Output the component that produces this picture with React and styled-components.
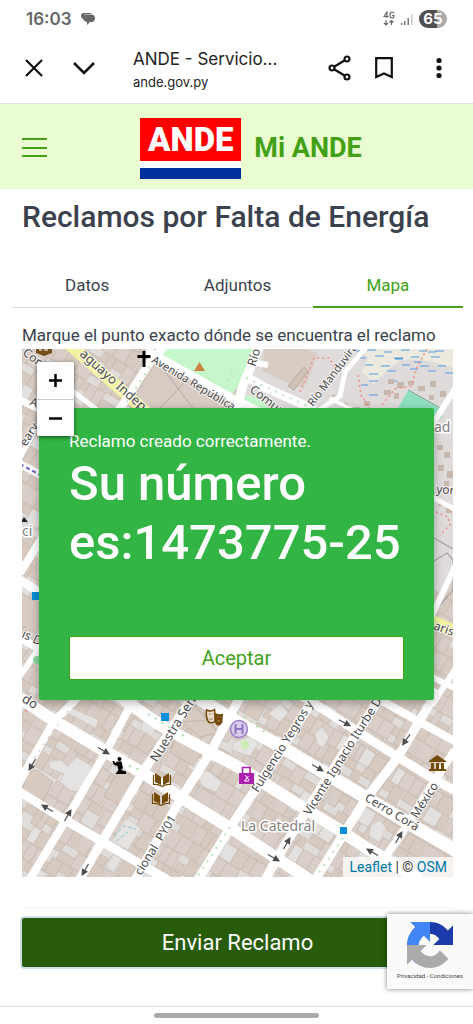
import { useState } from 'react';
import styled, { createGlobalStyle } from 'styled-components';

const GlobalStyle = createGlobalStyle`
* {
  box-sizing: border-box;
}
body {
  margin: 0;
  background: #ffffff;
  color: #3b424d;
  font-family: Roboto, 'Liberation Sans', sans-serif;
}
button {
  font-family: inherit;
  padding: 0;
  border: none;
  cursor: pointer;
}
`

const AppBody = styled.div`
position: relative;
display: flex;
flex-direction: column;
min-height: 100vh;
`

const StatusBar = styled.div`
display: flex;
align-items: center;
justify-content: space-between;
height: 38px;
padding: 0 26px;
color: #666666;
font-family: Inter, sans-serif;
`

const StatusGroup = styled.div`
display: flex;
align-items: center;
gap: ${props => props.$gap}px;
`

const Clock = styled.span`
font-size: 17px;
font-weight: 600;
`

const Battery = styled.span`
width: 28px;
height: 18px;
border-radius: 9px;
background: linear-gradient(90deg, #505050 65%, #aaaaaa 65%);
color: #ffffff;
font-size: 15px;
font-weight: 700;
line-height: 18px;
text-align: center;
`

const BrowserBar = styled.div`
display: flex;
align-items: flex-start;
height: 66px;
padding: 8px 1px 0 22px;
border-bottom: 1px solid #dbe3e3;
`

const IconButton = styled.button`
display: flex;
align-items: center;
justify-content: center;
width: ${props => props.$width || 44}px;
height: 44px;
background: transparent;
color: #111111;
`

const PageInfo = styled.div`
flex: 1;
min-width: 0;
padding-left: 11px;
color: #222222;
font-family: Inter, sans-serif;
`

const PageTitle = styled.div`
font-size: 17px;
line-height: 26px;
white-space: nowrap;
`

const PageUrl = styled.div`
font-size: 13px;
line-height: 20px;
`

const Header = styled.header`
position: relative;
display: flex;
align-items: center;
justify-content: center;
height: 85px;
padding-left: 29px;
background: #e9fdd0;
`

const MenuButton = styled.button`
position: absolute;
left: 22px;
top: 30px;
width: 25px;
height: 28px;
background: transparent;
color: #43a017;
`

const Brand = styled.a`
display: flex;
align-items: center;
gap: 13px;
padding-top: 3px;
color: #43a017;
font-size: 27px;
font-weight: 700;
text-decoration: none;
`

const Logo = styled.span`
width: 101px;
border-bottom: 11px solid #00309c;
background: #ffffff;
padding-bottom: 7px;
`

const LogoName = styled.span`
display: block;
height: 43px;
background: #fe0000;
color: #ffffff;
font-size: 33px;
font-weight: 900;
line-height: 43px;
text-align: center;
`

const Main = styled.main`
flex: 1;
display: flex;
flex-direction: column;
padding: 0 20px 0 22px;
`

const Title = styled.h1`
margin: 10px 0 0;
font-size: 30px;
font-weight: 500;
line-height: 36px;
`

const Tabs = styled.div`
display: flex;
height: 45px;
margin: 28px -10px 15px;
`

const Tab = styled.button`
flex: 1;
background: transparent;
border-bottom: ${props => props.$active ? '2px solid #43a017' : '1px solid #dcdcdc'};
color: ${props => props.$active ? '#43a017' : '#3b424d'};
font-size: 17px;
`

const Hint = styled.p`
margin: 0 0 2px;
font-size: 17px;
line-height: 24px;
white-space: nowrap;
`

const MapBox = styled.section`
position: relative;
flex: 1;
min-height: 480px;
overflow: hidden;
`

const MapSvg = styled.svg`
position: absolute;
width: 100%;
height: 100%;
font-family: 'Noto Sans', sans-serif;
`

const ZoomControl = styled.div`
position: absolute;
z-index: 2;
top: 13px;
left: 15px;
width: 37px;
border-radius: 2px;
background: #ffffff;
box-shadow: 0 1px 4px rgba(0, 0, 0, 0.6);
`

const ZoomButton = styled.button`
display: flex;
align-items: center;
justify-content: center;
width: 100%;
height: 37px;
background: transparent;

& + & {
  border-top: 1px solid #cccccc;
}
`

const Dialog = styled.div`
position: absolute;
top: 59px;
left: 17px;
right: 19px;
padding: 20px 30px;
border-radius: 2px;
background: #32b544;
box-shadow: 0 3px 10px rgba(0, 0, 0, 0.3);
color: #ffffff;
`

const DialogText = styled.p`
margin: 0;
font-size: 17px;
line-height: 26px;
`

const DialogTitle = styled.h2`
margin: 0 0 64px;
font-size: 49px;
font-weight: 500;
line-height: 59px;
`

const TicketNumber = styled.span`
display: block;
white-space: nowrap;
`

const AcceptButton = styled.button`
width: 100%;
height: 44px;
border: 1px solid #43a017;
border-radius: 2px;
background: #ffffff;
color: #43a017;
font-size: 20px;
`

const Attribution = styled.div`
position: absolute;
right: 0;
bottom: 0;
padding: 0 6px;
background: rgba(255, 255, 255, 0.75);
color: #333333;
font-size: 14px;
line-height: 20px;

a {
  color: #0078a8;
  text-decoration: none;
}
`

const Actions = styled.div`
margin-top: 30px;
padding: 10px 0 39px;
border-top: 1px solid #f5f5f5;
`

const SendButton = styled.button`
width: 100%;
height: 49px;
border-radius: 2px;
background: #285c0b;
box-shadow: 0 0 0 2px #cfdfe8;
color: #ffffff;
font-size: 22px;
`

const Captcha = styled.aside`
position: absolute;
right: 0;
bottom: 35px;
display: flex;
flex-direction: column;
align-items: center;
gap: 2px;
width: 86px;
height: 75px;
padding-top: 8px;
background: #fafafa;
box-shadow: 0 0 5px rgba(0, 0, 0, 0.5);
color: #444444;
font-size: 6px;
line-height: 12px;
`

const HomeArea = styled.footer`
display: flex;
justify-content: center;
height: 18px;
padding-top: 6px;
border-top: 1px solid #dcdcdc;
`

const HomeHandle = styled.div`
width: 35%;
height: 5px;
border-radius: 3px;
background: #aaaaaa;
`

const roads = [
  // north-west to south-east
  ['M20 698L53 720L108 753L143 773L183 799L240 834L310 880', 12],
  ['M100 682L133 706L163 727L210 752L240 768L302 807L338 829L368 849L420 880', 12],
  ['M190 693L235 721L278 745L328 775L365 797L415 827L458 852', 13],
  ['M295 692L312 702L352 728L398 757L435 780L458 792', 9],
  ['M370 694L418 721L458 743', 8],
  ['M20 792L60 817L103 842L150 870L168 880', 9],
  ['M20 464L45 477', 8],
  ['M20 580L45 596', 9],
  ['M20 638L45 652', 8],
  ['M430 496L458 511', 5],
  ['M430 676L458 690', 6],
  // south-west to north-east
  ['M78 697L53 723L30 763L18 785', 8],
  ['M137 693L103 757L70 813L28 882', 8],
  ['M195 693L143 772L103 840L78 882', 9],
  ['M240 697L210 753L180 800L153 848L135 880', 9],
  ['M317 693L278 755L255 790L230 828L198 880', 9],
  ['M385 690L328 777L305 813L285 845L265 880', 9],
  ['M438 690L398 757L365 800L343 835L315 880', 9],
  ['M455 750L435 780L402 833L380 865', 8],
  ['M20 573L45 533', 8],
  ['M20 676L45 640', 6],
  ['M20 458L38 425', 5],
  ['M430 620L458 560', 6],
  ['M432 705L458 665', 6],
  ['M432 425L458 384', 6],
  // north of the dialog
  ['M20 400L45 412', 7],
  ['M166 345L150 362L118 412', 8],
  ['M66 386L100 412', 5],
  ['M146 350L230 397L260 412', 8],
  ['M260 345L243 385L236 412', 9],
  ['M243 375L264 387L315 410', 9],
  ['M252 362L268 365', 6],
  ['M368 345L345 372L340 396L316 412', 5],
  ['M330 398L352 410', 4],
]

const arrows = [
  [104, 751, 30], [32, 765, 120], [47, 808, 210], [68, 815, -60], [85, 870, 120],
  [345, 723, 28], [318, 768, 30], [406, 740, 125], [287, 843, -60],
  [274, 858, 30], [372, 852, 210], [399, 837, -60],
]

const labels = [
  ['aguayo Indepen', 79, 355, 42, 13],
  ['Avenida República', 151, 362, 31, 11],
  ['Con', 22, 354, 38, 12],
  ['Río', 255, 367, -72, 12],
  ['Comun', 249, 391, 38, 12],
  ['Río Manduvirá', 313, 407, -53, 11],
  ['A', 29, 405, 20, 12],
  ['eary', 26, 447, -58, 12],
  ['is D', 21, 637, 25, 12],
  ['do', 21, 701, 32, 13],
  ['yor', 436, 493, 5, 12],
  ['aris', 433, 629, 20, 12],
  ['Nuestra Señora', 157, 763, -58, 13],
  ['Fulgencio Yegros y F', 258, 793, -58, 12],
  ['Vicente Ignacio Iturbe Dom', 310, 816, -58, 12],
  ['Cerro Corá', 364, 800, 31, 12],
  ['México', 417, 819, -57, 12],
  ['PY01', 162, 842, -58, 12],
  ['cional', 141, 876, -58, 12],
]

// Plots are laid out on a grid that is turned with the streets
function makePlots() {
  const plots = []
  let seed = 17
  const rand = () => {
    seed = (seed * 16807) % 2147483647
    return seed / 2147483647
  }
  for (let y = -280; y < 340; y += 17) {
    let x = -340
    while (x < 340) {
      const w = 6 + Math.round(rand() * 10)
      const kind = rand()
      const h = kind > 0.7 ? 9 : 16
      plots.push({ x, y: y + (kind > 0.85 ? 7 : 0), w, h, fill: kind < 0.08 ? '#e3e1df' : kind < 0.5 ? '#d9cfc8' : '#d6cac1' })
      x += w + (rand() > 0.85 ? 2 : 0)
    }
  }
  return plots
}

const plots = makePlots()

function CityMap() {
  return (
    <MapSvg viewBox="22 349 431 528" preserveAspectRatio="xMidYMid slice" aria-label="Mapa">
      <rect x="0" y="300" width="500" height="620" fill="#dfdcda" />
      <g transform="translate(237 640) rotate(31)" stroke="#c6b8ad" strokeWidth="0.7">
        {plots.map((p, i) => <rect key={i} x={p.x} y={p.y} width={p.w} height={p.h} fill={p.fill} />)}
      </g>
      {/* larger buildings */}
      <g fill="#d6cac1" stroke="#c3b3a7" strokeWidth="0.8">
        <path d="M28 772L37 770L53 782L43 801L22 790Z" />
        <path d="M119 769L139 781L123 807L104 796Z" />
        <path d="M178 734L204 749L193 766L170 752Z" />
        <path d="M181 722L192 703L218 733L200 737Z" />
        <path d="M20 592L38 603L38 634L20 625Z" />
      </g>
      <path d="M181 722L210 720M192 703L210 720L218 733" fill="none" stroke="#c3b3a7" strokeWidth="0.8" />
      <g fill="#e5e3e2" stroke="#cfc5be" strokeWidth="0.6">
        <path d="M49 762L60 760L68 766L76 757L92 766L82 793L70 790L60 782L64 774L50 768Z" />
        <path d="M126 818L141 828L128 850L112 841Z" />
        <path d="M69 707L98 720L96 728L68 713Z" />
        <path d="M134 713L141 709L147 717L158 724L152 736L140 729L143 722Z" />
        <path d="M197 775L208 771L222 782L216 792L202 786Z" />
        <path d="M371 825L380 820L386 828L379 842L369 836Z" />
        <path d="M315 734L322 727L329 737L323 748L317 744Z" />
        <path d="M280 703L288 713L280 722L269 714Z" />
        <path d="M234 742L252 736L258 744L250 756L232 750Z" />
      </g>
      <path d="M240 742L247 740L250 746L243 751Z" fill="#cdebb4" />
      <path d="M114 836L124 826L136 829M116 841L128 832" fill="none" stroke="#8ac5cf" strokeDasharray="4 2" />
      {/* northern edge */}
      <path d="M236 345H458V580L430 590V412H236Z" fill="#dedbda" />
      <path d="M146 376L168 350L236 408H130Z" fill="#d7cbc3" stroke="#c8bcb3" />
      <path d="M148 349L193 408M183 384L160 408" stroke="#b3aba4" fill="none" />
      <path d="M160 345H256L242 380L230 397L150 358Z" fill="#c6f7cb" />
      <path d="M246 395L265 400L268 412H240Z" fill="#c6f7cb" />
      <path d="M264 349H306L318 353L306 385L297 387L262 371Z" fill="#d8ccc5" />
      <path d="M304 367L308 371L294 390L288 386Z" fill="#cfc3b5" stroke="#b8aaa0" />
      <path d="M352 345H458V370Q430 358 400 360Q382 374 374 384L362 372L368 357Z" fill="#ece9df" />
      <path
        d="M354 351h8m5 -1h9m8 2h8m9 -2h9m9 1h8m8 0h9M357 358h9m9 -2h9m10 2h9m8 -1h8m12 0h9M365 365h8m8 1h9m12 -1h8m10 1h9m9 0h8M369 374h9m9 -3h9m14 -2h8m10 2h8m9 2h8M369 381h9m12 0h7M369 395h9M361 385h7M395 359h8m11 3h8m6 -10h8"
        fill="none" stroke="#539be4" strokeWidth="1.2"
      />
      <path d="M408 391L442 410V418H392Z" fill="#8ddfbd" />
      <path d="M408 390L442 409" stroke="#5ca789" />
      <g fill="#c7b8ad">
        <path d="M388 379h6v5h-6zm9 3h7v6h-7zm-13 8h7v5h-7zm10 3h5v6h-5zm14 -12h6v4h-6zm10 5h7v5h-7zm12 -5h6v6h-6zm10 10h6v6h-6zm-11 4h5v5h-5zm-76 12h7v5h-7zm11 -6h6v5h-6zm-22 2h6v5h-6zm-10 -8h6v5h-6z" />
        <path d="M437 445h6v5h-6zm7 7h6v6h-6zm-6 13h6v6h-6zm9 6h6v7h-6zm-3 10h5v5h-5zm-6 20h6v5h-6zm8 7h6v5h-6z" />
      </g>
      <path d="M434 538L458 552M434 561L447 553L453 560V590L434 612" fill="none" stroke="#aaa5a5" strokeWidth="1.3" />
      <g fill="none" stroke="#f28d85" strokeWidth="1.5" strokeDasharray="2 3">
        <path d="M300 392L314 358L329 358L337 370M427 349L418 365L411 386L395 389L382 405M358 375L361 395L370 409" />
        <path d="M436 512L448 517L450 525L440 535M20 710L30 711M203 698L220 696" />
      </g>
      <path d="M62 338L160 424" stroke="#f1f3a0" strokeWidth="12" />
      <path d="M430 620L458 633" stroke="#f1f3a0" strokeWidth="12" />
      <g fill="none" stroke="#ffffff" strokeLinejoin="round">
        {roads.map(([d, w]) => <path key={d} d={d} strokeWidth={w} />)}
      </g>
      <g fill="none" strokeWidth="2" strokeDasharray="2 6">
        <path d="M154 360L125 405M232 372L222 398M246 378L312 408M230 827L198 876M343 838L318 874" stroke="#bde3bf" />
        <path d="M68 711L50 735L30 765" stroke="#b5a1d7" strokeWidth="1" />
        <path d="M20 464L40 475" stroke="#6960cb" strokeDasharray="4 3" />
        <path d="M237 712L265 732M148 714L184 736M129 766L140 770" stroke="#afdca9" />
      </g>

      {arrows.map(([x, y, angle]) => (
        <g key={`${x}-${y}`} transform={`translate(${x} ${y}) rotate(${angle})`}>
          <path d="M-7 0H2" stroke="#4c4c4c" strokeWidth="1.2" />
          <path d="M0 -3.5L7 0L0 3.5Z" fill="#4c4c4c" />
        </g>
      ))}

      <g fill="#4b4b4b" stroke="#ffffff" strokeWidth="2" strokeOpacity="0.75" paintOrder="stroke">
        {labels.map(([text, x, y, angle, size]) => (
          <text key={text} fontSize={size} transform={`translate(${x} ${y}) rotate(${angle})`}>{text}</text>
        ))}
      </g>
      <g fill="#858181" stroke="#ffffff" strokeWidth="3" paintOrder="stroke" fontSize="14">
        <text x="241" y="831">La Catedral</text>
        <text x="434" y="432">ad</text>
        <text x="22" y="536">ci</text>
      </g>

      <path d="M142.500 351h3v4h5v3h-5v9h-3v-9h-5v-3h5z" fill="#000000" />
      <path d="M194 371L199.500 362L205 371Z" fill="#cc8245" />
      <path d="M36 346L52 346V353L44 356L36 353Z" fill="#74501f" />
      <path d="M39 350h3m2 0h4" stroke="#ffffff" />
      <path d="M21 522L24 517L28 522Z" fill="#222222" />
      <g fill="#0c8ed9">
        <rect x="32" y="592" width="8" height="8" />
        <rect x="161" y="713" width="8" height="8" />
        <rect x="340" y="827" width="7" height="7" />
      </g>
      <circle cx="37" cy="660" r="4" fill="#8bd5a2" />
      {/* kneeling figure */}
      <circle cx="119.500" cy="759" r="2" fill="#000000" />
      <path d="M117 761.500H121.500L123 768L121 770L126 771.500V774H115.500L118.500 770L117.500 766L113.500 764.500L112.500 761L114 761L115.500 763Z" fill="#000000" />
      {/* libraries */}
      {[[162, 780], [161, 799]].map(([x, y]) => (
        <g key={y} transform={`translate(${x} ${y})`}>
          <path d="M-7 -7L-1 -3V5L-7 2ZM7 -7L1 -3V5L7 2Z" fill="#734a08" />
          <path d="M-8.500 -5V4.500Q-4 4 0 6.500Q4 4 8.500 4.500V-5" fill="none" stroke="#734a08" strokeWidth="1.2" />
        </g>
      ))}
      {/* theatre */}
      <path d="M206.500 710Q211 712 214.500 709.500L215.500 721Q212 724 208.500 722Q205.500 717 206.500 710Z" fill="#e8ddcf" stroke="#734a08" strokeWidth="1.5" />
      <path d="M215 713Q219 715 223 713.500L222.500 722Q220 727 216.500 725Q213 721 215 713Z" fill="#734a08" />
      <path d="M209 714h2m1.500 0h1M209 719h4M217 717h1.500m2 0h1M217 721h3.500" stroke="#a98c64" />
      {/* hotel and shop */}
      <circle cx="239" cy="729" r="8.500" fill="#d9cdec" stroke="#9b7fc9" strokeWidth="1.5" />
      <path d="M235.500 724V734M242.500 724V734M235.500 729H242.500" stroke="#9175c2" strokeWidth="2" />
      <path d="M239 773H254V784H239Z" fill="#ad20ae" />
      <path d="M242.500 773V767.500H250V773" fill="none" stroke="#ad20ae" strokeWidth="1.6" />
      <path d="M245 775L249 780M248.500 776L244.500 781H249" fill="none" stroke="#ffffff" />
      {/* museum */}
      <path d="M429 761L437 755L446 761V762H429ZM431 763H434V769H431ZM436 763H439V769H436ZM441 763H444V769H441ZM429 769H446V771H429Z" fill="#734a08" />
    </MapSvg>
  )
}

function App() {
  const [tab, setTab] = useState('Mapa')
  const [open, setOpen] = useState(true)

  return (
    <AppBody>
      <GlobalStyle />
      <StatusBar>
        <StatusGroup $gap={9}>
          <Clock>16:03</Clock>
          <svg width="14" height="14" viewBox="0 0 14 14" fill="#666666">
            <path d="M3 1H9L11 2H5Q3 2 3 5V7H2Q0 6 0 4Q0 1 3 1Z" />
            <path d="M5 2.500H11Q14 3 14 6Q14 9 11 10H9L6 13V10Q2 9 2 6Q2 3 5 2.500Z" />
          </svg>
        </StatusGroup>
        <StatusGroup $gap={6}>
          <svg width="12" height="16" viewBox="0 0 12 16" fill="none" stroke="#666666" strokeWidth="1.2">
            <path d="M4 7V1L1 5.500H5.500M11 2.500Q10.500 1 9 1Q7 1 7 4Q7 7 9 7Q11 7 11 4.500H9" />
            <path d="M3 9V14M1 12L3 14L5 12M8.500 14V9.500M6.500 11.500L8.500 9.500L10.500 11.500" />
          </svg>
          <svg width="12" height="13" viewBox="0 0 12 13" fill="#777777">
            <path d="M0 10H1.500V12H0ZM3 8H4.500V12H3ZM6.500 5H8V12H6.500Z" />
            <path d="M10 1H11.500V12H10Z" fill="#c8c8c8" />
          </svg>
          <Battery>65</Battery>
        </StatusGroup>
      </StatusBar>

      <BrowserBar>
        <IconButton $width={24} aria-label="Cerrar">
          <svg width="18" height="18" viewBox="0 0 18 18" fill="none" stroke="currentColor" strokeWidth="2.2"><path d="M1 1L17 17M17 1L1 17" /></svg>
        </IconButton>
        <IconButton $width={76} aria-label="Minimizar">
          <svg width="22" height="13" viewBox="0 0 22 13" fill="none" stroke="currentColor" strokeWidth="2.6"><path d="M1 1L11 11L21 1" /></svg>
        </IconButton>
        <PageInfo>
          <PageTitle>ANDE - Servicio...</PageTitle>
          <PageUrl>ande.gov.py</PageUrl>
        </PageInfo>
        <IconButton aria-label="Compartir">
          <svg width="24" height="26" viewBox="0 0 24 26" fill="none" stroke="currentColor" strokeWidth="2.2">
            <circle cx="4" cy="13" r="2.500" /><circle cx="19" cy="4" r="2.500" /><circle cx="19" cy="22" r="2.500" />
            <path d="M6.500 11.500L16.500 5.500M6.500 14.500L16.500 20.500" />
          </svg>
        </IconButton>
        <IconButton aria-label="Guardar">
          <svg width="18" height="22" viewBox="0 0 18 22" fill="none" stroke="currentColor" strokeWidth="2.2"><path d="M1.200 1.200H16.800V20L9 16.500L1.200 20Z" /></svg>
        </IconButton>
        <IconButton $width={66} aria-label="Más opciones">
          <svg width="6" height="22" viewBox="0 0 6 22" fill="currentColor"><circle cx="3" cy="3.500" r="2.600" /><circle cx="3" cy="11" r="2.600" /><circle cx="3" cy="18.500" r="2.600" /></svg>
        </IconButton>
      </BrowserBar>

      <Header>
        <MenuButton aria-label="Menú">
          <svg width="25" height="23" viewBox="0 0 25 23" stroke="currentColor" strokeWidth="2"><path d="M0 4H25M0 13H25M0 21H25" /></svg>
        </MenuButton>
        <Brand href="#">
          <Logo><LogoName>ANDE</LogoName></Logo>
          Mi ANDE
        </Brand>
      </Header>

      <Main>
        <Title>Reclamos por Falta de Energía</Title>
        <Tabs role="tablist">
          {['Datos', 'Adjuntos', 'Mapa'].map(name => (
            <Tab key={name} role="tab" aria-selected={tab === name} $active={tab === name} onClick={() => setTab(name)}>{name}</Tab>
          ))}
        </Tabs>
        <Hint>Marque el punto exacto dónde se encuentra el reclamo</Hint>
        <MapBox>
          <CityMap />
          <ZoomControl>
            <ZoomButton aria-label="Acercar">
              <svg width="13" height="13" viewBox="0 0 13 13" stroke="#000000" strokeWidth="2.500"><path d="M0 6.500H13M6.500 0V13" /></svg>
            </ZoomButton>
            <ZoomButton aria-label="Alejar">
              <svg width="13" height="13" viewBox="0 0 13 13" stroke="#000000" strokeWidth="2.500"><path d="M0 6.500H13" /></svg>
            </ZoomButton>
          </ZoomControl>
          {open && (
            <Dialog role="dialog">
              <DialogText>Reclamo creado correctamente.</DialogText>
              <DialogTitle>Su número <TicketNumber>es:1473775-25</TicketNumber></DialogTitle>
              <AcceptButton onClick={() => setOpen(false)}>Aceptar</AcceptButton>
            </Dialog>
          )}
          <Attribution><a href="#">Leaflet</a> | © <a href="#">OSM</a></Attribution>
        </MapBox>
        <Actions>
          <SendButton>Enviar Reclamo</SendButton>
        </Actions>
      </Main>

      <Captcha>
        <svg width="46" height="46" viewBox="0 0 64 64">
          <path d="M64 32V4.700L56.800 11.900C51 4.700 42 0 32 0C21.600 0 12.400 5 6.500 12.700L18.300 24.600C19.400 22.500 21 20.700 23 19.300C25.100 17.700 28 16.400 32 16.400C37.500 16.600 42.200 19.500 45 23.600L36.600 32Z" fill="#1c3aa9" />
          <path d="M32 0H4.600L11.800 7.300C4.600 13.200 0 22 0 32C0 42.500 5 51.700 12.600 57.600L24.500 45.800C22.400 44.700 20.600 43 19.200 41C17.600 39 16.300 36 16.300 32C16.600 26.500 19.500 22 23.500 19.100L32 27.500Z" fill="#4285f4" />
          <path d="M0 32V59.400L7.200 52.200C13 59.400 22 64 32 64C42.400 64 51.600 59 57.500 51.300L45.700 39.400C44.600 41.500 43 43.300 41 44.800C38.900 46.400 36 47.700 32 47.700C26.500 47.400 22 44.500 19 40.400L27.400 32Z" fill="#ababab" />
        </svg>
        <span>Privacidad - Condiciones</span>
      </Captcha>
      <HomeArea><HomeHandle /></HomeArea>
    </AppBody>
  );
}

export default App;
